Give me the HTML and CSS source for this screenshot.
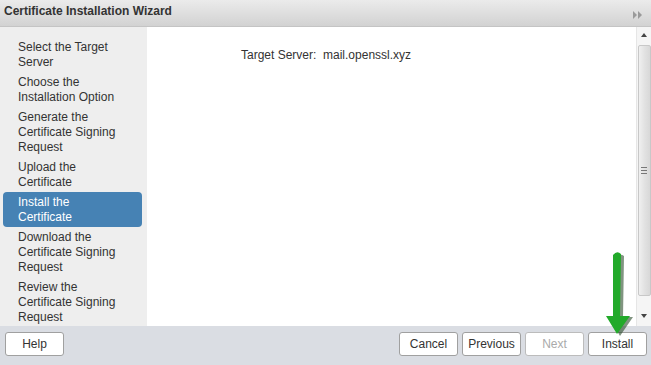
FILE: index.html
```html
<!DOCTYPE html>
<html lang="en">
<head>
    <meta charset="UTF-8">
    <title>Certificate Installation Wizard</title>
    <link rel="stylesheet" href="styles.css">
</head>
<body>
    <div class="wizard">
        <div class="titlebar">
            <span class="title">Certificate Installation Wizard</span>
            <svg class="collapse" width="9" height="8" viewBox="0 0 9 8">
                <path d="M0 0 L4 4 L0 8 Z M5 0 L9 4 L5 8 Z" fill="#9a9a9a"/>
            </svg>
        </div>
        <div class="main">
            <ul class="steps">
                <li>Select the Target Server</li>
                <li>Choose the Installation Option</li>
                <li>Generate the Certificate Signing Request</li>
                <li>Upload the Certificate</li>
                <li class="active">Install the Certificate</li>
                <li>Download the Certificate Signing Request</li>
                <li>Review the Certificate Signing Request</li>
            </ul>
            <div class="content">
                <p class="server">Target Server:&nbsp; mail.openssl.xyz</p>
            </div>
            <div class="scrollbar">
                <div class="arrow up"></div>
                <div class="thumb"><span class="grip"></span></div>
                <div class="arrow down"></div>
            </div>
        </div>
        <div class="footer">
            <button class="btn">Help</button>
            <div class="actions">
                <button class="btn">Cancel</button>
                <button class="btn">Previous</button>
                <button class="btn disabled">Next</button>
                <button class="btn">Install</button>
            </div>
        </div>
        <svg class="pointer" width="30" height="90" viewBox="0 0 30 90">
            <path d="M9 6 Q12 2 16 5 L15 66 L25 66 L12 85 L1 66 L9 66 Z" fill="#1a3d1a" opacity="0.55" transform="translate(2 1)"/>
            <path d="M7 5 Q11 0 15 4 L14 66 L24 66 L11 84 L0 66 L7 66 Z" fill="#22aa2a"/>
        </svg>
    </div>
</body>
</html>
```

FILE: styles.css
```css
* {
    margin: 0;
    padding: 0;
    box-sizing: border-box;
}

body {
    font-family: "Liberation Sans", Arial, sans-serif;
    font-size: 12px;
    color: #333;
    background: #fff;
}

.wizard {
    position: relative;
    width: 651px;
    height: 365px;
    display: flex;
    flex-direction: column;
}

.titlebar {
    height: 27px;
    display: flex;
    align-items: center;
    justify-content: space-between;
    padding: 0 9px 0 4px;
    background: linear-gradient(#ebebeb, #d2d2d2);
    border-bottom: 1px solid #c4c4c4;
}

.title {
    font-weight: bold;
    font-size: 12px;
    color: #333;
    margin-top: -4px;
}

.collapse {
    margin-top: 4px;
}

.main {
    flex: 1;
    display: flex;
    min-height: 0;
}

.steps {
    list-style: none;
    width: 147px;
    background: #eeeeee;
    padding: 10px 5px 0 3px;
}

.steps li {
    padding: 3px 18px 2px 15px;
    line-height: 15px;
    color: #333;
    border-radius: 4px;
}

.steps li.active {
    background: #4682b4;
    color: #fff;
}

.content {
    flex: 1;
    background: #fff;
}

.server {
    margin: 21px 0 0 94px;
    line-height: 15px;
}

.scrollbar {
    width: 15px;
    background: #f5f5f5;
    border-left: 1px solid #e6e6e6;
    display: flex;
    flex-direction: column;
    align-items: center;
}

.arrow {
    width: 0;
    height: 0;
    border-left: 3px solid transparent;
    border-right: 3px solid transparent;
}

.arrow.up {
    border-bottom: 4px solid #444;
    margin: 6px 0 8px;
}

.arrow.down {
    border-top: 4px solid #444;
    margin: 18px 0 0;
}

.thumb {
    width: 13px;
    height: 251px;
    border: 1px solid #c8c8c8;
    border-radius: 2px;
    background: linear-gradient(90deg, #f0f0f0, #e2e2e2 50%, #d8d8d8);
    display: flex;
    align-items: center;
    justify-content: center;
}

.grip {
    width: 6px;
    height: 7px;
    border-top: 1px solid #777;
    border-bottom: 1px solid #777;
    position: relative;
}

.grip::after {
    content: "";
    position: absolute;
    left: 0;
    right: 0;
    top: 2px;
    border-top: 1px solid #777;
}

.footer {
    height: 39px;
    background: #dadde3;
    display: flex;
    align-items: flex-start;
    justify-content: space-between;
    padding: 6px 4px 0 5px;
}

.actions {
    display: flex;
    gap: 4px;
}

.btn {
    width: 59px;
    height: 24px;
    background: #fff;
    border: 1px solid #a0a0a0;
    border-radius: 3px;
    font-family: "Liberation Sans", Arial, sans-serif;
    font-size: 12px;
    color: #333;
}

.btn.disabled {
    color: #aaa;
    border-color: #bcbcbc;
}

.pointer {
    position: absolute;
    left: 606px;
    top: 250px;
}
```
